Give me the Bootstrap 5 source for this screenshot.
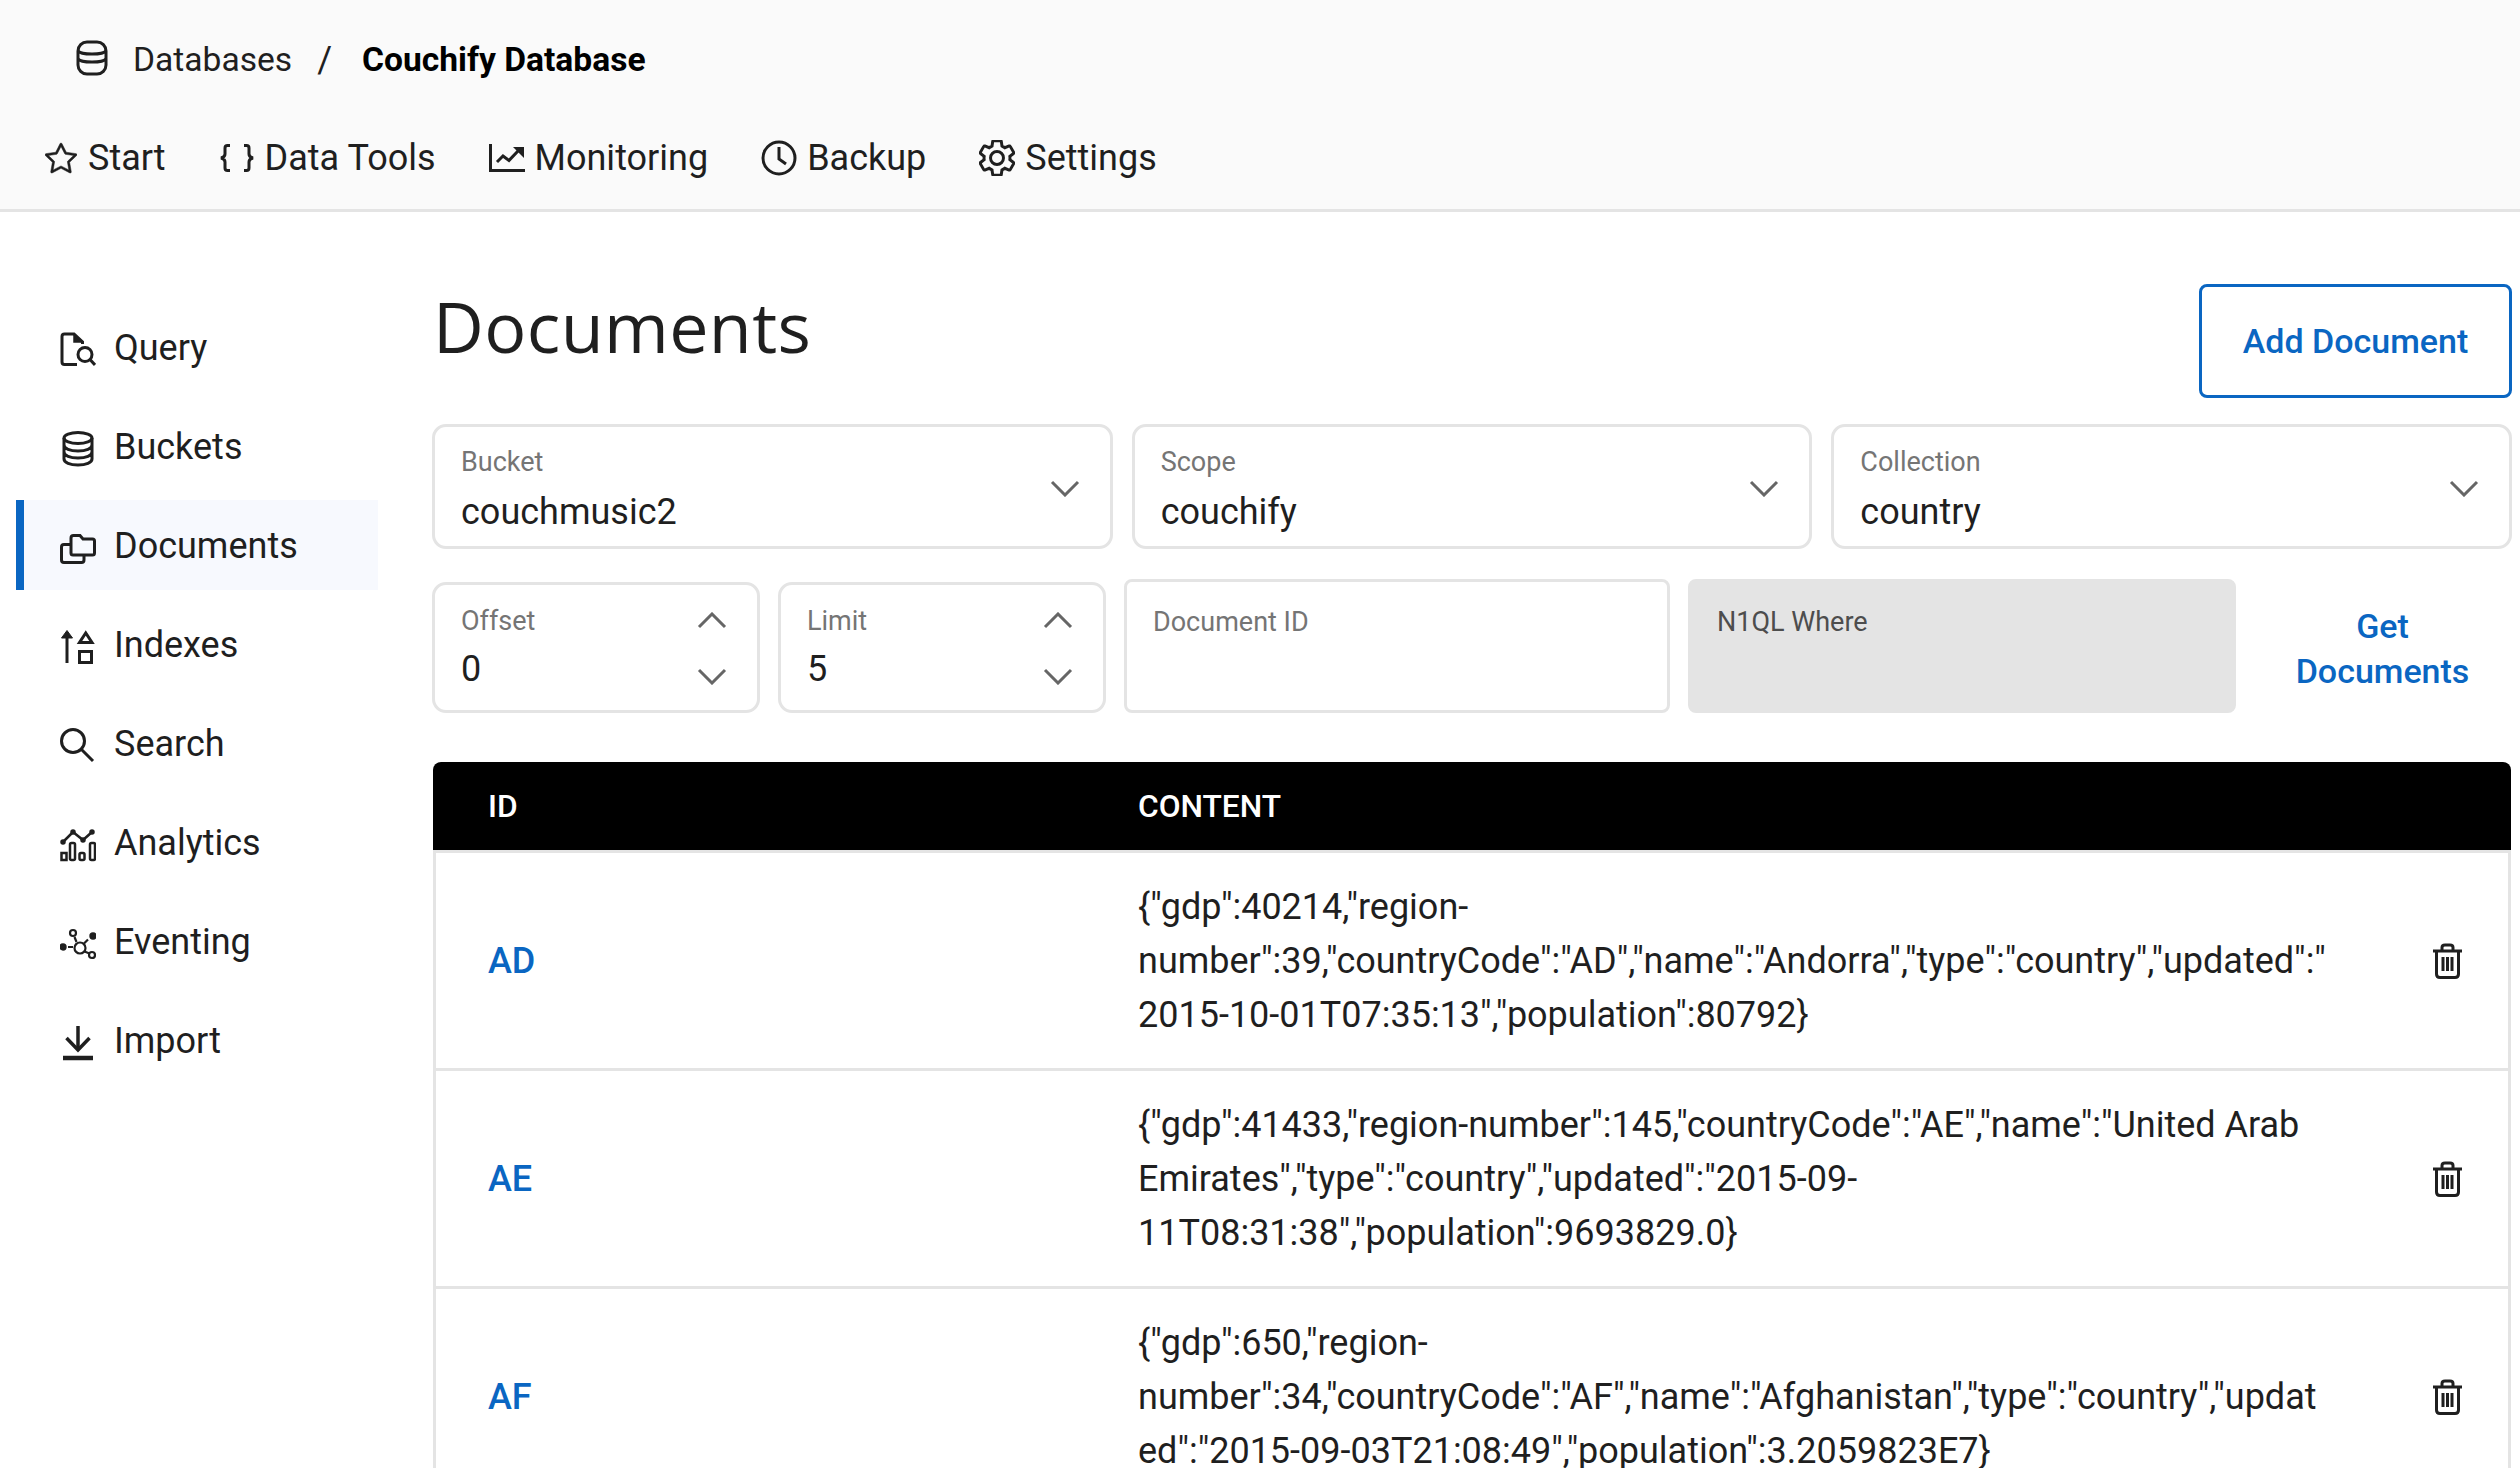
<!DOCTYPE html>
<html lang="en"><head><meta charset="utf-8"><title>Documents</title>
<link href="https://cdn.jsdelivr.net/npm/bootstrap@5.3.0/dist/css/bootstrap.min.css" rel="stylesheet">
<style>
html,body{height:1468px;overflow:hidden}
body{font-family:Roboto,"Liberation Sans",sans-serif;font-size:36px;color:#1f1f1f;background:#fff}
svg.ico{fill:none;stroke:currentColor;stroke-width:3;flex:none;display:block}
svg.ico .fl{fill:currentColor}
.topbar{height:212px;background:#fafafa;border-bottom:3px solid #e4e4e4;padding:40px 0 0 45px}
.crumbs{padding-left:31px;height:36px;font-size:33.6px}
.crumbs span{position:relative;top:2px}
.crumbs .c-db{margin-left:25px}
.crumbs .c-sep{margin:0 30px 0 25px;font-size:36px}
.crumbs .c-cur{font-weight:700;color:#000}
.tabs{margin-top:58px;height:48px;gap:53px}
.tabs a{color:#1f1f1f;text-decoration:none;gap:10px;display:flex;align-items:center}
.tabs a:first-child{gap:11px}
.shell{height:1256px;overflow:hidden}
.side{width:362px;margin-left:16px;padding-top:90px;flex:none;gap:9px}
.side a{height:90px;display:flex;align-items:center;padding:2px 0 0 36px;gap:18px;color:#1f1f1f;text-decoration:none;border-left:8px solid transparent}
.side a svg{margin-top:4px}
.side a.on{background:#f7f9fe;border-left-color:#0a66c2}
.mainc{margin-left:55px;width:2078px;padding-top:72px}
.ttl{font-family:"Open Sans","Noto Sans",sans-serif;font-size:70px;font-weight:400;margin:-2px 0 0;line-height:88px;letter-spacing:.4px;color:#1f1f1f}
.addbtn{width:313px;height:114px;margin-right:-1px;border:3px solid #0a66c2;border-radius:8px;color:#0a66c2;font-size:34px;font-weight:500;background:#fff;padding:0}
.addbtn:hover{color:#0a66c2;background:#fff;border-color:#0a66c2}
.frow1{margin:26px -1px 0;gap:19px}
.sel{flex:1 1 0;height:125px;border:3px solid #e4e4e4;border-radius:14px;padding:17px 26px 0;position:relative;background:#fff}
.lbl{font-size:27px;color:#757575;line-height:36px;display:block}
.val{font-size:36px;line-height:50px;color:#1f1f1f;margin-top:7px;display:block}
.chev{position:absolute;width:30px;height:17px;color:#666}
.chev svg{display:block;fill:none;stroke:currentColor;stroke-width:3}
.sel>.chev{right:30px;top:53px}
.frow2{margin:30px 0 0 -1px;gap:18px;height:134px}
.sel.num{width:328px;height:131px;flex:none;padding-top:18px;margin-top:2px}
.num .val{margin-top:5px}
.sel.num .c-up{top:27px}.sel.num .c-dn{top:83px}
.txt{height:134px;border:3px solid #e4e4e4;border-radius:8px;padding:22px 26px 0;flex:none;background:#fff}
.t1{width:546px}
.t2{width:548px;background:#e4e4e4;border-color:#e4e4e4}
.t2 .lbl{color:#4d4d4d}
.getbtn{flex:1;color:#0a66c2;font-size:34px;font-weight:500;line-height:45px;border:0;background:none;padding:5px 0 0}
.getbtn:hover{color:#0a66c2}
.dtable{margin:49px 0 0;table-layout:fixed;width:2078px;border-collapse:separate;border-spacing:0;font-size:36px}
.dtable th{background:#000;color:#fff;font-weight:500;font-size:31.7px;height:91px;padding:2px 0 0 55px;vertical-align:middle;border:0;border-bottom:3px solid #e4e4e4;box-shadow:none}
.dtable th:first-child{border-top-left-radius:8px}
.dtable th:last-child{border-top-right-radius:8px}
.dtable th.cc{padding-left:34px}
.dtable td{height:218px;padding:27px 0 26px;vertical-align:middle;border-bottom:3px solid #e4e4e4;box-shadow:none;color:#1f1f1f}
.dtable td.ci{padding-left:52px;border-left:3px solid #e4e4e4}
.dtable td.ci a{color:#0a66c2;text-decoration:none;font-weight:500;font-size:36px}
.dtable td.cc{padding-left:34px;line-height:54px;overflow-wrap:anywhere;padding-right:0}
.dtable td.cd{border-right:3px solid #e4e4e4}
.dtable td.cd svg{margin:0 45px 0 auto}
</style></head><body>
<header class="topbar">
<div class="crumbs d-flex align-items-center">
<svg class="ico" width="32" height="36" viewBox="0 0 32 36"><rect x="2" y="2" width="28" height="32" rx="9"/><path d="M2 11c3 4 25 4 28 0M2 19c3 4 25 4 28 0"/></svg>
<span class="c-db">Databases</span><span class="c-sep">/</span><span class="c-cur">Couchify Database</span>
</div>
<nav class="tabs d-flex align-items-center">
<a href="#"><svg class="ico" width="32" height="32" viewBox="0 0 16 16" style="stroke-width:.25"><path class="fl" d="M2.866 14.85c-.078.444.36.791.746.593l4.39-2.256 4.389 2.256c.386.198.824-.149.746-.592l-.83-4.73 3.522-3.356c.33-.314.16-.888-.282-.95l-4.898-.696L8.465.792a.513.513 0 0 0-.927 0L5.354 5.12l-4.898.696c-.441.062-.612.636-.283.95l3.523 3.356-.83 4.73zm4.905-2.767-3.686 1.894.694-3.957a.56.56 0 0 0-.163-.505L1.71 6.745l4.052-.576a.53.53 0 0 0 .393-.288L8 2.223l1.847 3.658a.53.53 0 0 0 .393.288l4.052.575-2.906 2.77a.56.56 0 0 0-.163.506l.694 3.957-3.686-1.894a.5.5 0 0 0-.461 0z"/></svg>Start</a>
<a href="#"><svg class="ico" width="36" height="30" viewBox="0 0 36 30"><path d="M11 2.5H8.5Q6 2.5 6 5V11Q6 14 2 15Q6 16 6 19V25Q6 27.5 8.5 27.5H11M25 2.5H27.5Q30 2.5 30 5V11Q30 14 34 15Q30 16 30 19V25Q30 27.5 27.5 27.5H25"/></svg>Data Tools</a>
<a href="#"><svg class="ico" width="36" height="30" viewBox="0 0 36 30"><path d="M1.5 1V27.5H36"/><path d="M8 19L14 13L20 17.5L29 8"/><path class="fl" d="M24 4H35V15Z" style="stroke:none"/></svg>Monitoring</a>
<a href="#"><svg class="ico" width="36" height="36" viewBox="0 0 36 36"><circle cx="18" cy="18" r="16"/><path d="M18 7V19L25 24"/></svg>Backup</a>
<a href="#"><svg class="ico" width="36" height="36" viewBox="2 2 20 20" style="stroke-width:1.65"><path d="M19.14 12.94c.04-.3.06-.61.06-.94 0-.32-.02-.64-.07-.94l2.03-1.58c.18-.14.23-.41.12-.61l-1.92-3.32c-.12-.22-.37-.29-.59-.22l-2.39.96c-.5-.38-1.03-.7-1.62-.94l-.36-2.54c-.04-.24-.24-.41-.48-.41h-3.84c-.24 0-.43.17-.47.41l-.36 2.54c-.59.24-1.13.57-1.62.94l-2.39-.96c-.22-.08-.47 0-.59.22L2.74 8.87c-.12.21-.08.47.12.61l2.03 1.58c-.05.3-.09.63-.09.94s.02.64.07.94l-2.03 1.58c-.18.14-.23.41-.12.61l1.92 3.32c.12.22.37.29.59.22l2.39-.96c.5.38 1.03.7 1.62.94l.36 2.54c.05.24.24.41.48.41h3.84c.24 0 .44-.17.47-.41l.36-2.54c.59-.24 1.13-.56 1.62-.94l2.39.96c.22.08.47 0 .59-.22l1.92-3.32c.12-.22.07-.47-.12-.61l-2.01-1.58zM12 15.6c-1.98 0-3.6-1.62-3.6-3.6s1.62-3.6 3.6-3.6 3.6 1.62 3.6 3.6-1.62 3.6-3.6 3.6z"/></svg>Settings</a>
</nav>
</header>
<div class="shell d-flex">
<aside class="side d-flex flex-column">
<a href="#"><svg class="ico" width="36" height="36" viewBox="0 0 36 36"><path d="M17 32.5H4.5Q2 32.5 2 30V4.5Q2 2 4.5 2H14L22.5 10V12"/><path class="fl" d="M14 3V10H21Z" stroke-width="1.5"/><circle cx="25" cy="22.5" r="7"/><path d="M30 27.5L35 33"/></svg>Query</a>
<a href="#"><svg class="ico" width="36" height="36" viewBox="0 0 36 36"><ellipse cx="18" cy="7" rx="14" ry="5.5"/><path d="M4 7V28C4 31.5 10 34 18 34S32 31.5 32 28V7M4 14C4 17.5 10 20 18 20S32 17.5 32 14M4 21C4 24.5 10 27 18 27S32 24.5 32 21"/></svg>Buckets</a>
<a href="#" class="on"><svg class="ico" width="36" height="36" viewBox="0 0 36 36"><path d="M11 23V8Q11 5.5 13.5 5.5H20L23 9H32.5Q34.5 9 34.5 11V23Q34.5 25 32.5 25H13Q11 25 11 23Z"/><path d="M11 14.5H4Q1.5 14.5 1.5 17V30Q1.5 32.5 4 32.5H21.5Q24 32.5 24 30V25"/></svg>Documents</a>
<a href="#"><svg class="ico" width="36" height="36" viewBox="0 0 36 36"><path d="M7 7V34"/><path class="fl" d="M7 1.5L12.5 9H1.5Z" stroke-width="1"/><path d="M19.5 13.5H32L25.75 4Z"/><rect x="19.5" y="22.5" width="12" height="11"/></svg>Indexes</a>
<a href="#"><svg class="ico" width="36" height="36" viewBox="0 0 36 36"><circle cx="13" cy="13" r="11.5"/><path d="M21.5 21.5L33 33"/></svg>Search</a>
<a href="#"><svg class="ico" width="36" height="36" viewBox="0 0 36 36" style="stroke-width:2.5"><path d="M3 15L13 5L23 13L32 5"/><circle class="fl" cx="3" cy="15" r="1.5"/><circle class="fl" cx="13" cy="5" r="1.5"/><circle class="fl" cx="23" cy="13" r="1.5"/><circle class="fl" cx="32" cy="5" r="1.5"/><rect x="1.5" y="26" width="5" height="7"/><rect x="10" y="16" width="5" height="17" rx="1.5"/><rect x="19.5" y="26" width="5" height="7" rx="1.5"/><rect x="30" y="16" width="5" height="17" rx="1.5"/></svg>Analytics</a>
<a href="#"><svg class="ico" width="36" height="36" viewBox="0 0 36 36" style="stroke-width:2.2"><circle class="fl" cx="3" cy="21" r="2.6"/><circle cx="13" cy="7" r="3"/><circle cx="20" cy="22" r="5.5"/><circle class="fl" cx="33" cy="10" r="2.6"/><circle cx="32" cy="29" r="3"/><path d="M8 21H13M14.5 11L16.5 16M24 17.5L28 13.5M24.5 25.5L29.5 27.5"/></svg>Eventing</a>
<a href="#"><svg class="ico" width="36" height="36" viewBox="0 0 36 36"><path d="M18 1V24" stroke-width="3.5"/><path d="M6.5 13L18 25L29.5 13" stroke-width="3.5"/><path d="M3 33H33" stroke-width="4.5"/></svg>Import</a>
</aside>
<main class="mainc">
<div class="d-flex justify-content-between align-items-start">
<h1 class="ttl">Documents</h1>
<button class="btn addbtn" type="button">Add Document</button>
</div>
<div class="frow1 d-flex">
<div class="sel"><span class="lbl">Bucket</span><span class="val">couchmusic2</span><span class="chev"><svg width="30" height="17" viewBox="0 0 30 17"><path d="M2 2L15 15L28 2"/></svg></span></div>
<div class="sel"><span class="lbl">Scope</span><span class="val">couchify</span><span class="chev"><svg width="30" height="17" viewBox="0 0 30 17"><path d="M2 2L15 15L28 2"/></svg></span></div>
<div class="sel"><span class="lbl">Collection</span><span class="val">country</span><span class="chev"><svg width="30" height="17" viewBox="0 0 30 17"><path d="M2 2L15 15L28 2"/></svg></span></div>
</div>
<div class="frow2 d-flex align-items-center">
<div class="sel num"><span class="lbl">Offset</span><span class="val">0</span><span class="chev c-up"><svg width="30" height="17" viewBox="0 0 30 17"><path d="M2 15L15 2L28 15"/></svg></span><span class="chev c-dn"><svg width="30" height="17" viewBox="0 0 30 17"><path d="M2 2L15 15L28 2"/></svg></span></div>
<div class="sel num"><span class="lbl">Limit</span><span class="val">5</span><span class="chev c-up"><svg width="30" height="17" viewBox="0 0 30 17"><path d="M2 15L15 2L28 15"/></svg></span><span class="chev c-dn"><svg width="30" height="17" viewBox="0 0 30 17"><path d="M2 2L15 15L28 2"/></svg></span></div>
<div class="txt t1"><span class="lbl">Document ID</span></div>
<div class="txt t2"><span class="lbl">N1QL Where</span></div>
<button class="btn getbtn" type="button">Get<br>Documents</button>
</div>
<table class="table dtable">
<colgroup><col style="width:671px"><col style="width:1230px"><col></colgroup>
<thead><tr><th>ID</th><th class="cc">CONTENT</th><th></th></tr></thead>
<tbody>
<tr><td class="ci"><a href="#">AD</a></td><td class="cc">{"gdp":40214,"region-number":39,"countryCode":"AD","name":"Andorra","type":"country","updated":"2015-10-01T07:35:13","population":80792}</td><td class="cd"><svg class="ico" width="31" height="36" viewBox="0 0 31 36"><path d="M1 8H30M4.5 8V31Q4.5 34.5 8 34.5H23Q26.5 34.5 26.5 31V8M10 8V4.5Q10 2 13 2H18Q21 2 21 4.5V8M11 14V28M15.5 14V28M20 14V28" stroke-width="3"/></svg></td></tr>
<tr><td class="ci"><a href="#">AE</a></td><td class="cc">{"gdp":41433,"region-number":145,"countryCode":"AE","name":"United Arab Emirates","type":"country","updated":"2015-09-11T08:31:38","population":9693829.0}</td><td class="cd"><svg class="ico" width="31" height="36" viewBox="0 0 31 36"><path d="M1 8H30M4.5 8V31Q4.5 34.5 8 34.5H23Q26.5 34.5 26.5 31V8M10 8V4.5Q10 2 13 2H18Q21 2 21 4.5V8M11 14V28M15.5 14V28M20 14V28" stroke-width="3"/></svg></td></tr>
<tr><td class="ci"><a href="#">AF</a></td><td class="cc">{"gdp":650,"region-number":34,"countryCode":"AF","name":"Afghanistan","type":"country","updated":"2015-09-03T21:08:49","population":3.2059823E7}</td><td class="cd"><svg class="ico" width="31" height="36" viewBox="0 0 31 36"><path d="M1 8H30M4.5 8V31Q4.5 34.5 8 34.5H23Q26.5 34.5 26.5 31V8M10 8V4.5Q10 2 13 2H18Q21 2 21 4.5V8M11 14V28M15.5 14V28M20 14V28" stroke-width="3"/></svg></td></tr>
</tbody></table>
</main>
</div>
<script src="https://cdn.jsdelivr.net/npm/bootstrap@5.3.0/dist/js/bootstrap.bundle.min.js"></script>
</body></html>
